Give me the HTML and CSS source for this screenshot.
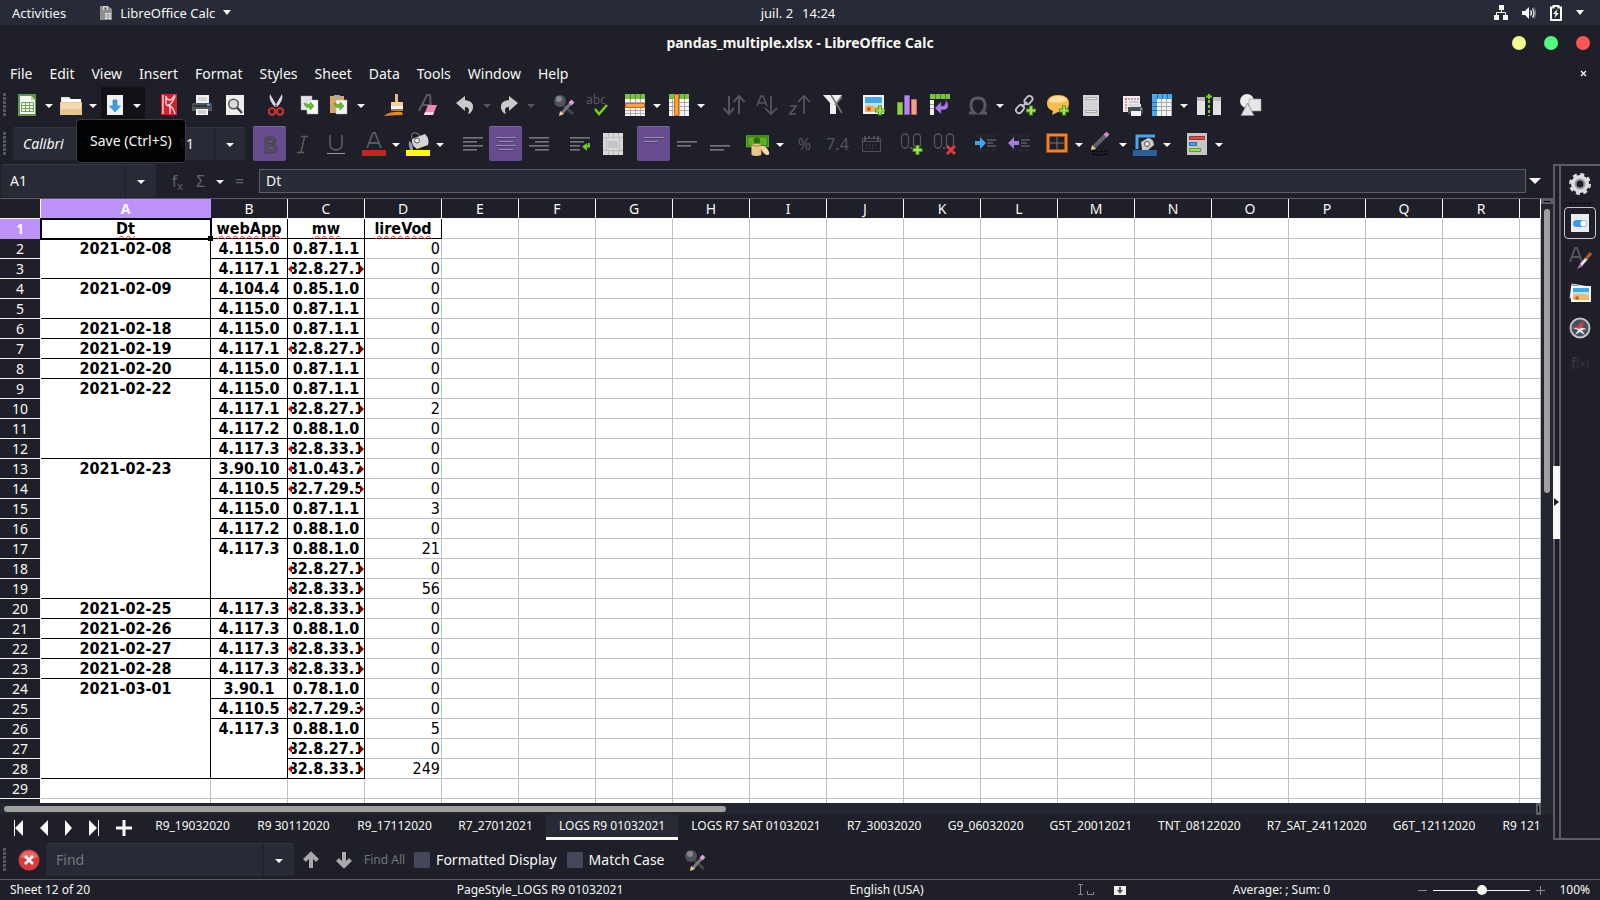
FILE: index.html
```html
<!DOCTYPE html>
<html lang="en">
<head>
  <meta charset="UTF-8">
  <title>pandas_multiple.xlsx - LibreOffice Calc</title>
  <link rel="stylesheet" href="styles.css">
</head>
<body>
  <header class="topbar">
    <div class="top-left">
      <button class="top-btn">Activities</button>
      <button class="top-btn app-btn">
        <svg width="12" height="16" viewBox="0 0 12 16"><path d="M0 1h8l4 3v11H0z" fill="#8f8f8f"/><path d="M3 1h5v4H3z" fill="#d8d8d8"/><circle cx="5.500" cy="3.500" r="1.500" fill="#777"/><path d="M5 8h6v6H5z" fill="#e8e8e8"/><path d="M5 10h6M5 12h6M8 8v6" stroke="#999"/></svg>
        LibreOffice Calc <span class="caret"></span>
      </button>
    </div>
    <button class="top-btn clock"><span>juil. 2</span><span>14:24</span></button>
    <div class="top-right">
      <svg width="14" height="15" viewBox="0 0 14 15"><path d="M5 0h5v5H5zM0 10h5v5H0zM9 10h5v5H9z" fill="#f8f8f2"/><path d="M7.500 5v3M2.500 10V7.500h9V10" stroke="#f8f8f2" fill="none"/></svg>
      <svg width="14" height="14" viewBox="0 0 14 14"><path d="M0 5h3l4-4v12L3 9H0z" fill="#f8f8f2"/><path d="M8.500 4.500q2 2.500 0 5M10.500 2.500q3 4.500 0 9" stroke="#f8f8f2" fill="none" stroke-width="1.300"/><path d="M12 1q3.500 6 0 12" stroke="#777" fill="none"/></svg>
      <svg width="12" height="16" viewBox="0 0 12 16"><path d="M1 2.500h2.500V1h5v1.500H11V15H1z" fill="none" stroke="#f8f8f2" stroke-width="2"/><path d="M7.500 4 3 9h2.500L4.500 13 9 8H6.500z" fill="#f8f8f2"/></svg>
      <span class="caret"></span>
    </div>
  </header>

  <div class="titlebar">
    <h1>pandas_multiple.xlsx - LibreOffice Calc</h1>
    <div class="win-buttons">
      <button class="win-btn min" aria-label="Minimize"></button>
      <button class="win-btn max" aria-label="Maximize"></button>
      <button class="win-btn close" aria-label="Close"></button>
    </div>
  </div>

  <nav class="menubar">
    <button>File</button><button>Edit</button><button>View</button><button>Insert</button><button>Format</button><button>Styles</button><button>Sheet</button><button>Data</button><button>Tools</button><button>Window</button><button>Help</button>
    <button class="doc-close" aria-label="Close document"><svg width="7" height="7" viewBox="0 0 7 7"><path d="M1 1l5 5M6 1 1 6" stroke="#f8f8f2" stroke-width="1.300"/></svg></button>
  </nav>

  <div class="toolbar standard">
    <span class="grip"></span>
    <div class="split">
      <button class="tool" aria-label="New"><svg viewBox="0 0 22 22"><path d="M2 0h18v22H2z" fill="#5f9a48"/><path d="M4 2h11l4 4v14H4z" fill="#f4f7f2"/><path d="M15 2v4h4z" fill="#b7d7a7"/><path d="M5.500 8.500h12v9h-12zM5.500 11.500h12M5.500 14.500h12M9.500 8.500v9M13.500 8.500v9" fill="none" stroke="#6da656"/></svg></button>
      <button class="drop" aria-label="New options"></button>
    </div>
    <div class="split">
      <button class="tool" aria-label="Open"><svg viewBox="0 0 22 22"><path d="M1 3h8l2 2h10v4H1z" fill="#e9e5df"/><path d="M2 5h19v4H2z" fill="#fff"/><path d="M0 8h22v13H0z" fill="#e8c48e"/><path d="M1 9h20v6H1z" fill="#f3dab0"/></svg></button>
      <button class="drop" aria-label="Open options"></button>
    </div>
    <div class="split hovered">
      <button class="tool" aria-label="Save"><svg viewBox="0 0 22 22"><path d="M3 1h16v20H3z" fill="#f0f0f0"/><path d="M9 6h4v6h3.500L11 18l-5.500-6H9z" fill="#3c9fe6" stroke="#2a7fc4" stroke-width=".6"/></svg></button>
      <button class="drop" aria-label="Save options"></button>
      <div class="tooltip" role="tooltip">Save (Ctrl+S)</div>
    </div>
    <span class="sep"></span>
    <button class="tool" aria-label="Export as PDF"><svg viewBox="0 0 22 22"><path d="M3 0h16v21H3z" fill="#c8252f"/><path d="M4 1h2v19H4z" fill="#e9a0a3"/><path d="M8 2q0 4 5 4l4-5M8 2v7q0 3 4 3v8M17 2q-3 9-7 9 5 1 7 9" fill="none" stroke="#f3cfd1" stroke-width="1.500"/></svg></button>
    <button class="tool" aria-label="Print"><svg viewBox="0 0 22 22"><path d="M5 1h13v9H5z" fill="#f2f2f2"/><path d="M7 4h9M7 6h9" stroke="#bbb"/><path d="M2 9h18l1 2v6H1v-6z" fill="#55585c"/><path d="M2 12h18" stroke="#303236" stroke-width="2"/><path d="M16 10h3v2h-3z" fill="#4aa5ef"/><path d="M5 15h12v6H5z" fill="#f6f6f6"/><path d="M7 17h8M7 19h8" stroke="#aaa"/></svg></button>
    <button class="tool" aria-label="Print Preview"><svg viewBox="0 0 22 22"><path d="M2 1h18v20H2z" fill="#eee"/><circle cx="9.500" cy="10" r="4.800" fill="#dcdcdc" stroke="#555" stroke-width="1.500"/><path d="M13 13.500l5 5.500" stroke="#444" stroke-width="2.500"/></svg></button>
    <span class="sep"></span>
    <button class="tool" aria-label="Cut"><svg viewBox="0 0 22 22"><path d="M5 0q-2 6 5 13l2-1zM17 0q2 6-5 13l-2-1z" fill="#d8d8d8"/><circle cx="7" cy="17.500" r="3.200" fill="none" stroke="#d8342a" stroke-width="2"/><circle cx="15" cy="17.500" r="3.200" fill="none" stroke="#d8342a" stroke-width="2"/></svg></button>
    <button class="tool" aria-label="Copy"><svg viewBox="0 0 22 22"><path d="M3 2h11v14H3z" fill="#e6e6e6" stroke="#999" stroke-width=".5"/><path d="M9 6h11v14H9z" fill="#f7f7f7" stroke="#aaa" stroke-width=".5"/><path d="M6 9q1 5 6 4.500V16l4-4-4-4v2.500q-3 0-6-1.500z" fill="#68c22a" stroke="#3f8a12" stroke-width=".6"/></svg></button>
    <div class="split">
      <button class="tool" aria-label="Paste"><svg viewBox="0 0 22 22"><path d="M2 2h14v17H2z" fill="#d6a764"/><path d="M6 1h6v3H6z" fill="#a9a9a9"/><path d="M8 6h11v14H8z" fill="#f7f7f7" stroke="#aaa" stroke-width=".5"/><path d="M6 9q1 5 6 4.500V16l4-4-4-4v2.500q-3 0-6-1.500z" fill="#68c22a" stroke="#3f8a12" stroke-width=".6"/></svg></button>
      <button class="drop" aria-label="Paste options"></button>
    </div>
    <span class="sep"></span>
    <button class="tool" aria-label="Clone Formatting"><svg viewBox="0 0 22 22"><path d="M12 0h3v8h-3z" fill="#e2b77a"/><path d="M8 8h12v4H8z" fill="#efcf9f"/><path d="M8 12h12v3H8z" fill="#f3f3f3"/><path d="M8 15h12v2H8z" fill="#a97938"/><path d="M1 22q6-5 18-4l1 3q-8 0-19 1z" fill="#e9861c"/></svg></button>
    <button class="tool" aria-label="Clear Formatting"><svg viewBox="0 0 22 22"><path d="M3 17 11 1h3l1 13M6 11h8" fill="none" stroke="#5a5a5a" stroke-width="2"/><path d="M12 11h9l-4 10H8z" fill="#ee86b7"/><path d="M9 18h9l-1 3H8z" fill="#f9d4e5"/></svg></button>
    <span class="sep"></span>
    <div class="split">
      <button class="tool" aria-label="Undo"><svg viewBox="0 0 22 22"><path d="M2 9 11 2v4q9 1 8 8-1 5-5 6 3-7-3-7v4z" fill="#c9c9c9"/></svg></button>
      <button class="drop dim" aria-label="Undo history"></button>
    </div>
    <div class="split">
      <button class="tool" aria-label="Redo"><svg viewBox="0 0 22 22"><path d="M20 9 11 2v4q-9 1-8 8 1 5 5 6-3-7 3-7v4z" fill="#c9c9c9"/></svg></button>
      <button class="drop dim" aria-label="Redo history"></button>
    </div>
    <span class="sep"></span>
    <button class="tool" aria-label="Find and Replace"><svg viewBox="0 0 22 22"><use href="#find-icon"/></svg></button>
    <button class="tool" aria-label="Spelling"><svg class="wide" viewBox="0 0 24 22"><text x="1" y="10" class="ic-text">abc</text><path d="M10 15l4 5 8-9" fill="none" stroke="#73d216" stroke-width="2.500"/></svg></button>
    <span class="sep"></span>
    <div class="split">
      <button class="tool" aria-label="Row"><svg viewBox="0 0 22 22"><path d="M1 0h20v22H1z" fill="#f4f4f4"/><path d="M1 16.500h20M1 19.500h20M6.500 5v17M11.500 5v17M16.500 5v17M1 8.500h20" stroke="#aaa"/><path d="M1 0h20v5H1z" fill="#7ac143"/><path d="M1.500 9.500h19v4h-19z" fill="#f7a53a" stroke="#d9650a"/><path d="M6.500 0v5M11.500 0v5M16.500 0v5" stroke="#4c8b1d"/></svg></button>
      <button class="drop" aria-label="Row options"></button>
    </div>
    <div class="split">
      <button class="tool" aria-label="Column"><svg viewBox="0 0 22 22"><path d="M1 0h20v22H1z" fill="#f4f4f4"/><path d="M1 8.500h20M1 12.500h20M1 16.500h20M4.500 5v17M11.500 5v17M16.500 5v17" stroke="#aaa"/><path d="M1 0h20v5H1z" fill="#7ac143"/><path d="M6.500 .5h4v21h-4z" fill="#f7a53a" stroke="#d9650a"/><path d="M11.500 0v5M16.500 0v5" stroke="#4c8b1d"/></svg></button>
      <button class="drop" aria-label="Column options"></button>
    </div>
    <span class="sep"></span>
    <button class="tool" aria-label="Sort"><svg class="wide" viewBox="0 0 24 22"><path d="M7 2v18M1.500 14 7 20l5-6M17 20V2M11.500 8 17 2l5.500 6" fill="none" stroke="#55555a" stroke-width="2"/></svg></button>
    <button class="tool" aria-label="Sort Ascending"><svg viewBox="0 0 22 22"><path d="M1 12 5 2h2l4 10M2.500 9h7M15 2v18M9 14l6 6 6-6" fill="none" stroke="#55555a" stroke-width="1.700"/></svg></button>
    <button class="tool" aria-label="Sort Descending"><svg viewBox="0 0 22 22"><path d="M1 12h6l-6 8h6M15 20V2M9 8l6-6 6 6" fill="none" stroke="#55555a" stroke-width="1.700"/></svg></button>
    <button class="tool" aria-label="AutoFilter"><svg viewBox="0 0 22 22"><path d="M1 1h19l-6 8v11H8V9z" fill="#eee"/><path d="M9 1l11 18M20 3l-7 8" stroke="#777" stroke-width="1.500"/></svg></button>
    <span class="sep"></span>
    <button class="tool" aria-label="Insert Image"><svg viewBox="0 0 22 22"><path d="M0 1h21v19H0z" fill="#f5f5f5"/><path d="M2 3h17v7H2z" fill="#3fa9ea"/><path d="M2 9h17v4H2z" fill="#b9e2f7"/><path d="M2 12q6-2 9 0t8-1v7H2z" fill="#f0b35e"/><circle cx="6" cy="15" r="2" fill="#d0521a"/><use href="#plus-badge"/></svg></button>
    <button class="tool" aria-label="Insert Chart"><svg viewBox="0 0 22 22"><path d="M1.500 8.500h5v12h-5z" fill="#8fd04e" stroke="#62a022"/><path d="M8.500 1.500h5v19h-5z" fill="#b288ea" stroke="#8455c8"/><path d="M15.500 5.500h5v15h-5z" fill="#eda08e" stroke="#c96b58"/></svg></button>
    <button class="tool" aria-label="Insert Pivot Table"><svg viewBox="0 0 22 22"><path d="M1 0h20v5H1z" fill="#7ac143"/><path d="M6.500 0v5M11.500 0v5M16.500 0v5" stroke="#4c8b1d"/><path d="M1 6h4v15H1z" fill="#eee"/><path d="M1 10.500h4M1 14.500h4" stroke="#999"/><path d="M17 6q6 10-5 10v4l-6-6 6-6v4q5 1 5-6z" fill="#a87ae0" stroke="#6f3fb5" stroke-width=".6"/></svg></button>
    <span class="sep"></span>
    <div class="split">
      <button class="tool" aria-label="Special Character"><svg viewBox="0 0 22 22"><path d="M2 19h5.500q-3.500-3-3.500-8 0-7 7-7t7 7q0 5-3.500 8H20" fill="none" stroke="#5a5a5e" stroke-width="3"/></svg></button>
      <button class="drop" aria-label="More characters"></button>
    </div>
    <button class="tool" aria-label="Insert Hyperlink"><svg viewBox="0 0 22 22"><g fill="none" stroke="#c4c4c4" stroke-width="1.800"><rect x="11.500" y="1.500" width="6" height="9" rx="3" transform="rotate(42 14.500 6)"/><rect x="3" y="10.500" width="6" height="9" rx="3" transform="rotate(42 6 15)"/><path d="M8 13l5-5"/></g><use href="#plus-badge"/></svg></button>
    <button class="tool" aria-label="Insert Comment"><svg viewBox="0 0 22 22"><path d="M11 1q11 0 11 8.500T11 18l-6 3 1-4q-6-2-6-7.500Q0 1 11 1z" fill="#f8bd4c"/><path d="M11 2q9 0 9 5-9 3-18 1 1-6 9-6z" fill="#fde0a0"/><use href="#plus-badge"/></svg></button>
    <button class="tool" aria-label="Headers and Footers"><svg viewBox="0 0 22 22"><path d="M3 1h16v21H3z" fill="#d4d4d4"/><path d="M5.500 3.500h11v2h-11zM5.500 16.500h11v2h-11z" fill="#e8e8e8" stroke="#aaa"/></svg></button>
    <span class="sep"></span>
    <button class="tool" aria-label="Define Print Area"><svg viewBox="0 0 22 22"><path d="M2 2h17v16H2z" fill="#efefef"/><path d="M4 5h14M5 4v13" stroke="#d04040" stroke-dasharray="2 1"/><path d="M8 8h10M8 11h4" stroke="#aaa"/><path d="M10 10h10v4H10z" fill="#ddd"/><path d="M7 13h15v7H7z" fill="#4a4d52"/><path d="M19 14h2v2h-2z" fill="#4aa5ef"/><path d="M10 17h10v5H10z" fill="#f4f4f4"/></svg></button>
    <div class="split">
      <button class="tool" aria-label="Freeze Rows and Columns"><svg viewBox="0 0 22 22"><path d="M1 0h20v22H1z" fill="#f4f4f4"/><path d="M5 8.500h16M5 12.500h16M5 16.500h16M10.500 5v17M15.500 5v17M20.500 5v17" stroke="#aaa"/><path d="M1 0h20v5H6v17H1z" fill="#4aa8ee"/><path d="M6.500 0v5M11.500 0v5M16.500 0v5M1 8.500h5M1 12.500h5M1 16.500h5" stroke="#2470b5"/></svg></button>
      <button class="drop" aria-label="Freeze options"></button>
    </div>
    <button class="tool" aria-label="Split Window"><svg class="wide" viewBox="0 0 24 22"><path d="M0 3h8v18H0zM16 3h8v18h-8z" fill="#e2e2e2"/><path d="M0 3h8v4H0zM16 3h8v4h-8z" fill="#bdbdbd"/><path d="M12 6v16" stroke="#73d216" stroke-width="2" stroke-dasharray="3 2"/><path d="M12 0v5M9 2.500h6" stroke="#73d216" stroke-width="2"/></svg></button>
    <span class="sep"></span>
    <button class="tool" aria-label="Show Draw Functions"><svg viewBox="0 0 22 22"><circle cx="8" cy="7" r="7" fill="#ececec"/><path d="M10 5h12v12H10z" fill="#e6e6e6" stroke="#999" stroke-width=".6"/><path d="M8.500 9 15 21.500H2z" fill="#e2e2e2" stroke="#888" stroke-width=".8"/></svg></button>
  </div>

  <div class="toolbar">
    <span class="grip"></span>
    <div class="combo font-name">
      <input type="text" value="Calibri" aria-label="Font Name">
      <button class="drop" aria-label="Font list"></button>
    </div>
    <span class="sep"></span>
    <div class="combo font-size">
      <input type="text" value="11" aria-label="Font Size">
      <button class="drop" aria-label="Size list"></button>
    </div>
    <span class="sep"></span>
    <button class="tool active" aria-label="Bold"><svg viewBox="0 0 22 22"><path d="M6 4h6q5 0 5 4 0 3-3 3.500 4 .5 4 4 0 4.500-6 4.500H6zM9 6.500v4h3q2 0 2-2t-2-2zM9 13v4.500h3q3 0 3-2.300T12 13z" fill="#55525a" stroke="#3a3640" stroke-width=".7" fill-rule="evenodd"/></svg></button>
    <button class="tool" aria-label="Italic"><svg viewBox="0 0 22 22"><path d="M9 3.500h7M5 19.500h7M12.500 4 9 19" fill="none" stroke="#5a5a5e" stroke-width="1.500"/></svg></button>
    <button class="tool" aria-label="Underline"><svg viewBox="0 0 22 22"><path d="M5 2v9q0 6 6 6t6-6V2" fill="none" stroke="#5a5a5e" stroke-width="1.600"/><path d="M2 20.500h18" stroke="#999"/></svg></button>
    <span class="sep"></span>
    <div class="split">
      <button class="tool" aria-label="Font Color"><svg class="wide" viewBox="0 0 24 24"><path d="M5 16 11 1h2l6 15M7.500 11h9" fill="none" stroke="#5a5a5e" stroke-width="1.800"/><path d="M0 18h24v6H0z" fill="#c9211e"/></svg></button>
      <button class="drop" aria-label="Font colors"></button>
    </div>
    <div class="split">
      <button class="tool" aria-label="Highlighting Color"><svg class="wide" viewBox="0 0 24 24"><path d="M6 6q-2-6 4-5 4 1 5 5" fill="none" stroke="#888"/><path d="M6 7 19 2q5 5 3 11l-11 4Q5 13 6 7z" fill="#d4d4d4"/><circle cx="11" cy="8.500" r="2.500" fill="#eee" stroke="#555"/><path d="M3 9q4 2 4 9H4q-2-5-1-9z" fill="#999"/><path d="M0 18h24v6H0z" fill="#ff0"/></svg></button>
      <button class="drop" aria-label="Highlighting colors"></button>
    </div>
    <span class="sep"></span>
    <button class="tool" aria-label="Align Left"><svg viewBox="0 0 22 22"><path d="M1 5h20M1 9h14M1 13h20M1 17h14" stroke="#55555a" stroke-width="2"/><path d="M1 4.500h20M1 8.500h14M1 12.500h20M1 16.500h14" stroke="#77777a"/></svg></button>
    <button class="tool active" aria-label="Center Horizontally"><svg viewBox="0 0 22 22"><path d="M1 5h20M4 9h14M1 13h20M4 17h14" stroke="#4c3b68" stroke-width="2"/><path d="M1 4.500h20M4 8.500h14M1 12.500h20M4 16.500h14" stroke="#9a8fae"/></svg></button>
    <button class="tool" aria-label="Align Right"><svg viewBox="0 0 22 22"><path d="M1 5h20M7 9h14M1 13h20M7 17h14" stroke="#55555a" stroke-width="2"/><path d="M1 4.500h20M7 8.500h14M1 12.500h20M7 16.500h14" stroke="#77777a"/></svg></button>
    <span class="sep"></span>
    <button class="tool" aria-label="Wrap Text"><svg viewBox="0 0 22 22"><path d="M1 5h20M1 9h14M1 13h10M1 17h10" stroke="#55555a" stroke-width="2"/><path d="M1 4.500h20M1 8.500h14M1 12.500h10M1 16.500h10" stroke="#77777a"/><path d="M21 10v4.500h-3V18l-5-4.500L18 10v2h1v-2z" fill="#73c41e"/></svg></button>
    <button class="tool" aria-label="Merge and Center Cells"><svg viewBox="0 0 22 22"><path d="M1 0h20v22H1z" fill="#d8d8d8"/><path d="M1 4.500h20M1 17.500h20M6.500 0v4M11.500 0v4M16.500 0v4M6.500 18v4M11.500 18v4M16.500 18v4M4.500 5v12M17.500 5v12" stroke="#bbb"/><path d="M6 8h10v7H6z" fill="#c4c4c4"/></svg></button>
    <span class="sep"></span>
    <button class="tool active" aria-label="Align Top"><svg viewBox="0 0 22 22"><path d="M1 5h20M1 9h14" stroke="#4c3b68" stroke-width="2"/><path d="M1 4.500h20M1 8.500h14" stroke="#9a8fae"/></svg></button>
    <button class="tool" aria-label="Center Vertically"><svg viewBox="0 0 22 22"><path d="M1 9h20M1 13h14" stroke="#55555a" stroke-width="2"/><path d="M1 8.500h20M1 12.500h14" stroke="#77777a"/></svg></button>
    <button class="tool" aria-label="Align Bottom"><svg viewBox="0 0 22 22"><path d="M1 13h20M1 17h14" stroke="#55555a" stroke-width="2"/><path d="M1 12.500h20M1 16.500h14" stroke="#77777a"/></svg></button>
    <span class="sep"></span>
    <div class="split">
      <button class="tool" aria-label="Format as Currency"><svg class="wide" viewBox="0 0 22 22"><path d="M0 3h21v11H0z" fill="#5fae2c"/><path d="M1.500 4.500h18v8h-18z" fill="none" stroke="#3b7f12"/><circle cx="10" cy="8" r="3" fill="#2f6d0c"/><path d="M5 12q5-3 9 0v9q-5 2-9 0z" fill="#e9c684"/><path d="M5 12q5 2 9 0" fill="none" stroke="#a9803a"/><ellipse cx="17.500" cy="17" rx="2.500" ry="5" transform="rotate(-40 17.500 17)" fill="#f3d9a3"/></svg></button>
      <button class="drop" aria-label="Currencies"></button>
    </div>
    <button class="tool num" aria-label="Format as Percent">%</button>
    <button class="tool num" aria-label="Format as Number">7.4</button>
    <button class="tool" aria-label="Format as Date"><svg viewBox="0 0 22 22"><path d="M2.500 5.500h18v13h-18zM2 8.500h18" fill="none" stroke="#505055"/><path d="M5 3v5M9 3v3M14 3v3M18 3v5" stroke="#505055" stroke-width="2"/><path d="M6 12h11M9 15h6" stroke="#505055" stroke-dasharray="1 2"/></svg></button>
    <span class="sep"></span>
    <button class="tool" aria-label="Add Decimal Place"><svg class="wide" viewBox="0 0 24 24"><rect x="1.500" y="2" width="7" height="14" rx="3.500" fill="none" stroke="#55555a" stroke-width="1.300"/><rect x="13.500" y="2" width="7" height="14" rx="3.500" fill="none" stroke="#55555a" stroke-width="1.300"/><path d="M11 15v2" stroke="#55555a" stroke-width="2"/><path d="M17.500 13v10M12.500 18h10" stroke="#4d9a14" stroke-width="4"/><path d="M17.500 14v8M13.500 18h8" stroke="#a4e45e" stroke-width="2"/></svg></button>
    <button class="tool" aria-label="Delete Decimal Place"><svg class="wide" viewBox="0 0 24 24"><rect x="1.500" y="2" width="7" height="14" rx="3.500" fill="none" stroke="#55555a" stroke-width="1.300"/><rect x="13.500" y="2" width="7" height="14" rx="3.500" fill="none" stroke="#55555a" stroke-width="1.300"/><path d="M11 15v2" stroke="#55555a" stroke-width="2"/><path d="M14 14l8 8M22 14l-8 8" stroke="#dc3b3b" stroke-width="3"/></svg></button>
    <span class="sep"></span>
    <button class="tool" aria-label="Increase Indent"><svg viewBox="0 0 22 22"><path d="M0 8h5V4l6 6-6 6v-4H0z" fill="#3fa4ee"/><path d="M12 7h9M12 10h6M12 13h9" stroke="#4c4c51" stroke-width="2"/><path d="M3 3h18M3 17h18" stroke="#35343f" stroke-dasharray="5 2"/></svg></button>
    <button class="tool" aria-label="Decrease Indent"><svg viewBox="0 0 22 22"><path d="M11 8H6V4l-6 6 6 6v-4h5z" fill="#a67be0"/><path d="M13 7h9M13 10h6M13 13h9" stroke="#4c4c51" stroke-width="2"/><path d="M3 3h18M3 17h18" stroke="#35343f" stroke-dasharray="5 2"/></svg></button>
    <span class="sep"></span>
    <div class="split">
      <button class="tool" aria-label="Borders"><svg viewBox="0 0 22 22"><path d="M2 2h18v16H2z" fill="none" stroke="#c9560a" stroke-width="3.500"/><path d="M2 2h18v16H2z" fill="none" stroke="#f9962e" stroke-width="1.500"/><path d="M11 4v12M4 10h14" stroke="#77777f"/></svg></button>
      <button class="drop" aria-label="Border presets"></button>
    </div>
    <div class="split">
      <button class="tool" aria-label="Border Style"><svg viewBox="0 0 22 22"><path d="M4 14 16 2" stroke="#5f6163" stroke-width="4"/><path d="M15 3l3-3" stroke="#d68ad6" stroke-width="4"/><path d="M1 17l1-5 4 4z" fill="#f3cf8f"/><path d="M2 18q9 2 16-1M2 21q9 2 16-1" fill="none" stroke="#000" stroke-dasharray="3 1"/></svg></button>
      <button class="drop" aria-label="Border styles"></button>
    </div>
    <div class="split">
      <button class="tool" aria-label="Border Color"><svg class="wide" viewBox="0 0 24 24"><path d="M4 17V4h18" fill="none" stroke="#3fa9f0" stroke-width="3"/><path d="M8 10l7-4q6 1 6 7l-6 5H9z" fill="#c9c9c9"/><circle cx="14" cy="12" r="2.500" fill="#eee" stroke="#555"/><path d="M0 18h24v6H0z" fill="#2a6099"/></svg></button>
      <button class="drop" aria-label="Border colors"></button>
    </div>
    <span class="sep"></span>
    <div class="split">
      <button class="tool" aria-label="Conditional Formatting"><svg viewBox="0 0 22 22"><path d="M1 0h20v22H1z" fill="#c6c6c6"/><path d="M3.500 3.500h15v3h-15z" fill="#d94f4f" stroke="#a82e2e"/><path d="M3.500 9.500h7v3h-7z" fill="#4aa3ea" stroke="#276eb0"/><path d="M3.500 15.500h11v3h-11z" fill="#9bdc58" stroke="#5f9d22"/></svg></button>
      <button class="drop" aria-label="Conditional options"></button>
    </div>
  </div>

  <div class="workspace">
    <main class="document">
      <div class="formula-bar">
        <div class="combo name-box">
          <input type="text" value="A1" aria-label="Name Box">
          <button class="drop" aria-label="Named ranges"></button>
        </div>
        <button class="fx" aria-label="Function Wizard">f<sub>x</sub></button>
        <button class="fx" aria-label="Select Function">&Sigma;</button>
        <button class="drop" aria-label="Functions"></button>
        <button class="fx" aria-label="Formula">=</button>
        <input class="formula" type="text" value="Dt" aria-label="Input line">
        <button class="drop big" aria-label="Expand formula bar"></button>
      </div>
      <div class="sheet-area">
        <div class="sheet">
          <table id="grid"></table>
        </div>
        <div class="vscroll"><span class="vsplit"></span><span class="vthumb"></span></div>
      </div>
      <div class="hscroll"><span class="hthumb"></span><span class="hsplit"></span></div>
      <div class="tabs">
        <button class="nav-btn" aria-label="First sheet"><svg width="10" height="16" viewBox="0 0 10 16"><path d="M0 0h1v16H0zM9 0v16L1 8z" fill="#f8f8f2"/></svg></button>
        <button class="nav-btn" aria-label="Previous sheet"><svg width="10" height="16" viewBox="0 0 10 16"><path d="M9 0v16L1 8z" fill="#f8f8f2"/></svg></button>
        <button class="nav-btn" aria-label="Next sheet"><svg width="10" height="16" viewBox="0 0 10 16"><path d="M1 0v16l7-8z" fill="#f8f8f2"/></svg></button>
        <button class="nav-btn" aria-label="Last sheet"><svg width="10" height="16" viewBox="0 0 10 16"><path d="M0 0v16l8-8zM9 0h1v16H9z" fill="#f8f8f2"/></svg></button>
        <button class="nav-btn add" aria-label="Add sheet"><svg width="18" height="18" viewBox="0 0 18 18"><path d="M9 1v16M1 9h16" stroke="#f8f8f2" stroke-width="3"/></svg></button>
        <button class="tab">R9_19032020</button><button class="tab">R9 30112020</button><button class="tab">R9_17112020</button><button class="tab">R7_27012021</button><button class="tab current">LOGS R9 01032021</button><button class="tab">LOGS R7 SAT 01032021</button><button class="tab">R7_30032020</button><button class="tab">G9_06032020</button><button class="tab">G5T_20012021</button><button class="tab">TNT_08122020</button><button class="tab">R7_SAT_24112020</button><button class="tab">G6T_12112020</button><button class="tab">R9 12102020</button>
      </div>
    </main>
    <div class="splitter"><button class="grabber" aria-label="Hide sidebar"></button></div>
    <aside class="sidebar">
      <button class="side-btn" aria-label="Sidebar Settings"><svg viewBox="0 0 22 22"><circle cx="11" cy="11" r="9.500" fill="none" stroke="#dedede" stroke-width="3" stroke-dasharray="4 3.460"/><circle cx="11" cy="11" r="6.500" fill="none" stroke="#dedede" stroke-width="5"/><circle cx="11" cy="11" r="4.500" fill="none" stroke="#999" stroke-width="2"/></svg></button>
      <span class="side-line"></span>
      <button class="side-btn on" aria-label="Properties"><svg viewBox="0 0 22 22"><path d="M2 2h18v18H2z" fill="#ececec"/><rect x="4" y="8" width="14" height="7" rx="3.500" fill="#3f9ae6"/><circle cx="14.500" cy="11.500" r="3" fill="#fff"/></svg></button>
      <button class="side-btn" aria-label="Styles"><svg viewBox="0 0 22 22"><path d="M1 15 6 1h2l5 14M3 10h8" fill="none" stroke="#55555a" stroke-width="1.800"/><path d="M12 18 18 11" stroke="#e0e0e0" stroke-width="3"/><path d="M17 12l5-6" stroke="#b85a1c" stroke-width="3"/><path d="M8 22l3-5 3 2z" fill="#d766c0"/></svg></button>
      <button class="side-btn" aria-label="Gallery"><svg viewBox="0 0 22 22"><path d="M3 2 20 5l-3 13-16-2z" fill="#4a8ed0" stroke="#ddd"/><path d="M2 4h20v16H2z" fill="#f7f7f7"/><path d="M4 6h16v6H4z" fill="#3fa9ea"/><path d="M4 10h16v3H4z" fill="#b9e2f7"/><path d="M4 13q8-2 16 0v5H4z" fill="#f2b964"/><circle cx="8" cy="16" r="1.800" fill="#d0521a"/></svg></button>
      <button class="side-btn" aria-label="Navigator"><svg viewBox="0 0 22 22"><circle cx="11" cy="11" r="9.500" fill="#465063" stroke="#c0c0c0" stroke-width="2"/><path d="M11 7l1.500 3.500L18 12l-5 1 3 5-5-3-5 3 3-5-5-2 5-1z" fill="#e6e6e6"/><path d="M15 3l-1 8-6-1zM3 10l8-1v3z" fill="#d83a3a"/></svg></button>
      <button class="side-btn func" aria-label="Functions">f<sub>(x)</sub></button>
    </aside>
  </div>

  <div class="findbar">
    <span class="grip"></span>
    <button class="find-close" aria-label="Close Find Bar"><svg width="22" height="22" viewBox="0 0 22 22"><circle cx="11" cy="11" r="10.500" fill="#d93b3f"/><path d="M2 8a10 10 0 0 1 18 0q-9 4-18 0z" fill="#e8686a"/><path d="M7 7l8 8M15 7l-8 8" stroke="#fff" stroke-width="2.600"/></svg></button>
    <div class="combo find-box">
      <input type="text" placeholder="Find" aria-label="Find">
      <button class="drop" aria-label="Search history"></button>
    </div>
    <button class="find-arrow" aria-label="Find Previous"><svg width="18" height="18" viewBox="0 0 18 18"><path d="M9 17V5M2.500 9.500 9 3l6.500 6.500" fill="none" stroke="#a9a9a9" stroke-width="4"/></svg></button>
    <button class="find-arrow" aria-label="Find Next"><svg width="18" height="18" viewBox="0 0 18 18"><path d="M9 1v12M2.500 8.500 9 15l6.500-6.500" fill="none" stroke="#a9a9a9" stroke-width="4"/></svg></button>
    <button class="find-all">Find All</button>
    <input type="checkbox" id="formatted"><label for="formatted">Formatted Display</label>
    <input type="checkbox" id="matchcase"><label for="matchcase">Match Case</label>
    <button class="tool" aria-label="Find and Replace"><svg viewBox="0 0 22 22">
      <defs>
        <g id="find-icon"><circle cx="7" cy="7" r="6" fill="#4f5256"/><circle cx="6" cy="5" r="3" fill="#85888c"/><path d="M11 12l9 8" stroke="#48494c" stroke-width="2.500"/><path d="M9 19l9-10" stroke="#77797b" stroke-width="3"/><path d="M17 10l3-3" stroke="#e29ae0" stroke-width="4"/><path d="M6 22l1-5 4 3z" fill="#f3cf8f"/></g>
        <g id="plus-badge"><path d="M17 11.500v10M12 16.500h10" stroke="#4d9a14" stroke-width="4"/><path d="M17 12.500v8M13 16.500h8" stroke="#a4e45e" stroke-width="2"/></g>
      </defs>
      <use href="#find-icon"/></svg></button>
  </div>

  <footer class="statusbar">
    <span class="st-left">Sheet 12 of 20</span>
    <span>PageStyle_LOGS R9 01032021</span>
    <span>English (USA)</span>
    <span class="st-icons">
      <svg width="16" height="12" viewBox="0 0 16 12"><path d="M0 .5h5M0 10.500h5M2.500 0v11M9.500 7v3.500h6V8" fill="none" stroke="#8a8a8c"/></svg>
      <svg width="12" height="9" viewBox="0 0 12 9"><path d="M0 0h12v9H0z" fill="#f0f0f0"/><path d="M5 1h2v3h2L6 8 3 4h2z" fill="#555"/></svg>
    </span>
    <span>Average: ; Sum: 0</span>
    <span class="zoom">
      <button class="zoom-btn" aria-label="Zoom out"><svg width="9" height="9" viewBox="0 0 9 9"><path d="M0 4.500h9" stroke="#8a8a8c"/></svg></button>
      <input type="range" min="20" max="180" value="100" aria-label="Zoom">
      <button class="zoom-btn" aria-label="Zoom in"><svg width="9" height="9" viewBox="0 0 9 9"><path d="M0 4.500h9M4.500 0v9" stroke="#8a8a8c"/></svg></button>
      <span class="zoom-value">100%</span>
    </span>
  </footer>

  <script>
    // date, webApp, mw, lireVod - an empty value continues the merged cell above
    const rows = [
      ["2021-02-08", "4.115.0", "0.87.1.1", 0],
      ["", "4.117.1", "82.8.27.1", 0],
      ["2021-02-09", "4.104.4", "0.85.1.0", 0],
      ["", "4.115.0", "0.87.1.1", 0],
      ["2021-02-18", "4.115.0", "0.87.1.1", 0],
      ["2021-02-19", "4.117.1", "82.8.27.1", 0],
      ["2021-02-20", "4.115.0", "0.87.1.1", 0],
      ["2021-02-22", "4.115.0", "0.87.1.1", 0],
      ["", "4.117.1", "82.8.27.1", 2],
      ["", "4.117.2", "0.88.1.0", 0],
      ["", "4.117.3", "82.8.33.1", 0],
      ["2021-02-23", "3.90.10", "81.0.43.7", 0],
      ["", "4.110.5", "82.7.29.5", 0],
      ["", "4.115.0", "0.87.1.1", 3],
      ["", "4.117.2", "0.88.1.0", 0],
      ["", "4.117.3", "0.88.1.0", 21],
      ["", "", "82.8.27.1", 0],
      ["", "", "82.8.33.1", 56],
      ["2021-02-25", "4.117.3", "82.8.33.1", 0],
      ["2021-02-26", "4.117.3", "0.88.1.0", 0],
      ["2021-02-27", "4.117.3", "82.8.33.1", 0],
      ["2021-02-28", "4.117.3", "82.8.33.1", 0],
      ["2021-03-01", "3.90.1", "0.78.1.0", 0],
      ["", "4.110.5", "82.7.29.3", 0],
      ["", "4.117.3", "0.88.1.0", 5],
      ["", "", "82.8.27.1", 0],
      ["", "", "82.8.33.1", 249]
    ];
    const letters = "ABCDEFGHIJKLMNOPQR".split("");
    const blanks = "<td></td>".repeat(15);

    function span(r, c) {
      let n = 1;
      while (rows[r + n] && rows[r + n][c] === "") n++;
      return n;
    }

    let html = '<colgroup><col class="c-num"><col class="c-a">' + '<col class="c-std">'.repeat(17) + "<col></colgroup>";
    html += "<tr><th></th>" + letters.map(l => `<th class="${l === "A" ? "sel" : ""}">${l}</th>`).join("") + "<th></th></tr>";
    html += '<tr><th class="sel">1</th><td class="key cursor"><u>Dt</u></td><td class="key"><u>webApp</u></td><td class="key"><u>mw</u></td><td class="key"><u>lireVod</u></td>' + blanks + "</tr>";
    rows.forEach((row, r) => {
      html += `<tr><th>${r + 2}</th>`;
      for (let c = 0; c < 2; c++) {
        if (row[c]) html += `<td class="key" rowspan="${span(r, c)}">${row[c]}</td>`;
      }
      const long = row[2].length > 8;
      html += `<td class="key${long ? " long" : ""}"><div class="clip"><span>${row[2]}</span></div></td><td class="num">${row[3]}</td>${blanks}</tr>`;
    });
    html += "<tr><th>29</th>" + "<td></td>".repeat(4) + blanks + "</tr>";
    html += "<tr><th></th>" + "<td></td>".repeat(4) + blanks + "</tr>";
    document.getElementById("grid").innerHTML = html;
  </script>
</body>
</html>
```
FILE: styles.css
```css
* {
  box-sizing: border-box;
}
body {
  margin: 0;
  height: 100vh;
  display: flex;
  flex-direction: column;
  overflow: hidden;
  background: #1e1f29;
  color: #f8f8f2;
  font-family: "Noto Sans", "Open Sans", sans-serif;
  font-size: 14px;
  line-height: 20px;
}
button, input {
  font: inherit;
  color: inherit;
}
button {
  padding: 0;
  border: none;
  background: none;
}
svg {
  display: block;
  overflow: visible;
}

/* desktop bar */
.topbar {
  display: grid;
  grid-template-columns: 1fr auto 1fr;
  align-items: center;
  height: 25px;
  padding: 0 16px 0 12px;
  background: #272b37;
  font-size: 13px;
}
.top-left, .top-right, .app-btn, .clock {
  display: flex;
  align-items: center;
}
.top-left {
  gap: 34px;
}
.app-btn {
  gap: 8px;
}
.clock {
  gap: 9px;
}
.top-right {
  justify-content: flex-end;
  gap: 14px;
}
.caret {
  border: 4px solid transparent;
  border-top: 5px solid #f8f8f2;
  border-bottom: none;
}

/* window title */
.titlebar {
  display: grid;
  grid-template-columns: 1fr auto 1fr;
  align-items: center;
  height: 36px;
  border-bottom: 1px solid #1a1a23;
}
.titlebar h1 {
  grid-column: 2;
  margin: 0;
  font-size: 14px;
}
.win-buttons {
  display: flex;
  justify-content: flex-end;
  gap: 18px;
  padding-right: 10px;
}
.win-btn {
  width: 14px;
  height: 14px;
  border-radius: 50%;
}
.min { background: #f1fa8c; }
.max { background: #50fa7b; }
.close { background: #ff5555; }

.menubar {
  display: flex;
  align-items: center;
  gap: 17px;
  height: 25px;
  padding: 1px 13px 0 10px;
  border-bottom: 1px solid #1a1a23;
}
.doc-close {
  margin-left: auto;
}

/* toolbars */
.toolbar {
  display: flex;
  align-items: center;
  height: 39px;
  padding-bottom: 2px;
}
.grip {
  width: 3px;
  height: 24px;
  margin: 0 7px 0 3px;
  background: repeating-linear-gradient(#55555f 0 3px, transparent 3px 4px);
}
.sep {
  width: 8px;
}
.hovered + .sep {
  width: 7px;
}
.tool {
  display: flex;
  align-items: center;
  justify-content: center;
  width: 33px;
  height: 35px;
}
.tool svg, .side-btn svg {
  width: 22px;
  height: 22px;
}
.tool svg.wide {
  width: 24px;
  height: 24px;
}
.tool.active {
  background: #674d8f;
  border-top: 1px solid #80669f;
  border-radius: 2px;
}
.tool.num {
  color: #55555a;
  font-size: 16px;
}
.ic-text {
  font-size: 12px;
  fill: #5a5a5e;
}
.split {
  position: relative;
  display: flex;
  width: 44px;
  height: 35px;
}
.split .tool {
  width: 28px;
}
.split.hovered {
  background: #111117;
}
.drop {
  display: flex;
  align-items: center;
  justify-content: center;
  width: 16px;
}
.drop::after {
  content: "";
  border: 4px solid transparent;
  border-top-color: #f8f8f2;
  border-bottom: none;
  margin-top: 2px;
}
.drop.dim::after {
  border-top-color: #55555f;
}
.tooltip {
  position: absolute;
  top: 32px;
  left: -25px;
  z-index: 2;
  padding: 11px 13px;
  border: 1px solid #3c3c40;
  border-radius: 4px;
  background: rgba(0, 0, 0, 0.92);
  white-space: nowrap;
}
.combo {
  display: flex;
  height: 33px;
  border-top: 1px solid #34363f;
  border-radius: 3px;
  background: #282a36;
}
.combo input {
  flex: 1;
  min-width: 0;
  padding: 0 10px;
  border: none;
  background: none;
}
.combo .drop {
  width: 31px;
  border-left: 1px solid #1e1f29;
}
.font-name {
  width: 143px;
}
.font-name input {
  font-style: italic;
}
.font-size {
  width: 81px;
}
.font-size input {
  padding-left: 14px;
}

/* document */
.workspace {
  flex: 1;
  min-height: 0;
  display: flex;
}
.document {
  flex: 1;
  min-width: 0;
  display: flex;
  flex-direction: column;
}
.formula-bar {
  display: flex;
  align-items: center;
  height: 35px;
  padding: 0 11px 1px 1px;
  border-bottom: 1px solid #5d5c66;
}
.name-box {
  width: 155px;
}
.name-box input {
  padding: 0 9px;
}
.fx {
  width: 23px;
  color: #63636a;
  font-size: 16px;
}
.fx:first-of-type {
  margin-left: 10px;
}
.fx sub {
  font-size: 11px;
  vertical-align: -3px;
  line-height: 0;
}
.formula {
  flex: 1;
  min-width: 0;
  height: 24px;
  margin: 0 2px 0 8px;
  padding: 0 6px;
  border: 1px solid #5d5c66;
  background: #282a36;
}
.drop.big {
  width: 14px;
}
.drop.big::after {
  border-width: 6px;
  border-bottom: none;
  margin-top: 0;
}
.sheet-area {
  flex: 1;
  min-height: 0;
  display: flex;
}
.sheet {
  flex: 1;
  min-width: 0;
  overflow: hidden;
  background: #fff;
}
#grid {
  width: 100%;
  table-layout: fixed;
  border-collapse: separate;
  border-spacing: 0;
}
.c-num { width: 41px; }
.c-a { width: 170px; }
.c-std { width: 77px; }
#grid th, #grid td {
  height: 20px;
  padding: 0;
  border-right: 1px solid #c0c0c0;
  border-bottom: 1px solid #c0c0c0;
  line-height: 19px;
  vertical-align: top;
}
#grid th {
  border-color: #f8f8f2;
  background: #1e1f29;
  font-weight: normal;
}
#grid th.sel {
  background: #bd93f9;
  border-color: #bd93f9;
  font-weight: bold;
}
#grid td {
  color: #000;
  font-family: "DejaVu Sans Condensed", "DejaVu Sans", sans-serif;
  font-size: 16px;
}
#grid td.key {
  border-color: #000;
  font-weight: bold;
  text-align: center;
}
#grid td.num {
  padding-right: 1px;
  text-align: right;
}
#grid u {
  text-decoration: underline wavy #f22 1px;
  text-decoration-skip-ink: none;
  text-underline-offset: 1px;
}
#grid td.cursor {
  position: relative;
  outline: 2px solid #000;
  outline-offset: -1px;
}
.cursor::after {
  content: "";
  position: absolute;
  right: -3px;
  bottom: -3px;
  width: 5px;
  height: 5px;
  background: #000;
}
.clip {
  display: flex;
  justify-content: center;
  height: 19px;
  overflow: hidden;
}
/* long values are cut on both sides and get red arrows */
.long {
  position: relative;
}
.long .clip {
  margin: 0 4px;
}
.long::before, .long::after {
  content: "";
  position: absolute;
  top: 6px;
  border: 4px solid transparent;
}
.long::before {
  left: 0;
  border-right: 4px solid #d00000;
  border-left: none;
}
.long::after {
  right: 0;
  border-left: 4px solid #900000;
  border-right: none;
}

/* scrollbars */
.vscroll {
  display: flex;
  flex-direction: column;
  align-items: center;
  width: 12px;
  background: #232631;
}
.vsplit {
  width: 12px;
  height: 5px;
  margin-bottom: 5px;
  border: solid #5d5c66;
  border-width: 2px 3px;
  background: #000;
}
.vthumb {
  width: 6px;
  height: 47%;
  border-radius: 3px;
  background: #a0a09e;
}
.hscroll {
  display: flex;
  align-items: center;
  justify-content: space-between;
  height: 12px;
  padding: 0 12px 0 4px;
  background: #232631;
}
.hthumb {
  width: 47%;
  height: 6px;
  border-radius: 3px;
  background: #a0a09e;
}
.hsplit {
  width: 5px;
  height: 12px;
  border: solid #5d5c66;
  border-width: 3px 2px;
  background: #000;
}

/* sheet tabs */
.tabs {
  display: flex;
  height: 25px;
  margin-right: 12px;
  padding-left: 6px;
  overflow: hidden;
}
.nav-btn {
  flex: none;
  display: flex;
  align-items: center;
  justify-content: center;
  width: 25px;
}
.nav-btn.add {
  width: 36px;
}
.tab {
  flex: none;
  min-width: 101px;
  padding: 0 13px;
  border: solid transparent;
  border-width: 0 0 3px;
  font-size: 12px;
  white-space: nowrap;
}
.tab.current {
  background: #282a36;
  border-color: #f8f8f2;
}

/* sidebar */
.splitter {
  display: flex;
  align-items: center;
  width: 8px;
  border: 2px solid #5d5c66;
}
.grabber {
  flex: none;
  display: flex;
  align-items: center;
  justify-content: center;
  width: 7px;
  height: 73px;
  margin-left: -2px;
  background: #f8f8f2;
}
.grabber::after {
  content: "";
  border: 4px solid transparent;
  border-left: 5px solid #1e1f29;
  border-right: none;
}
.sidebar {
  display: flex;
  flex-direction: column;
  align-items: center;
  gap: 3px;
  width: 39px;
  padding: 2px 1px 0 0;
  border: solid #5d5c66;
  border-width: 2px 0;
}
.side-btn {
  display: flex;
  align-items: center;
  justify-content: center;
  width: 32px;
  height: 32px;
}
.side-line {
  width: 22px;
  border-top: 1px dashed #000;
}
.side-btn.on {
  border: 1px solid #c8c8c8;
  border-radius: 4px;
}
.func {
  color: #3a3a42;
  font-size: 16px;
}
.func sub {
  font-size: 11px;
}

/* find bar */
.findbar {
  display: flex;
  align-items: center;
  height: 39px;
}
.find-close {
  margin: 0 6px 0 5px;
}
.find-box {
  width: 248px;
}
.find-box input::placeholder {
  color: #75757c;
}
.find-arrow {
  display: flex;
  justify-content: center;
  width: 33px;
}
.find-all {
  margin: 0 9px 0 4px;
  color: #75757c;
  font-size: 12px;
}
.findbar input[type="checkbox"] {
  appearance: none;
  width: 16px;
  height: 16px;
  margin: 0 6px 0 0;
  border-radius: 2px;
  background: #44475a;
}
.findbar label {
  margin-right: 10px;
}
.findbar .tool {
  margin-left: 4px;
}

/* status bar */
.statusbar {
  display: grid;
  grid-template-columns: 22fr 23fr 20fr 6fr 17fr auto;
  align-items: center;
  height: 21px;
  border-top: 1px solid #5d5c66;
  font-size: 12px;
  line-height: 16px;
  text-align: center;
}
.st-left {
  padding-left: 10px;
  text-align: left;
}
.st-icons, .zoom {
  display: flex;
  align-items: center;
}
.st-icons {
  gap: 20px;
  padding-left: 30px;
}
.zoom {
  gap: 6px;
  padding-right: 10px;
}
.zoom-value {
  margin-left: 8px;
}
.zoom input {
  appearance: none;
  width: 97px;
  height: 1px;
  margin: 0;
  background: #f8f8f2;
}
.zoom input::-webkit-slider-thumb {
  appearance: none;
  width: 10px;
  height: 10px;
  border-radius: 50%;
  background: #f8f8f2;
}
```
